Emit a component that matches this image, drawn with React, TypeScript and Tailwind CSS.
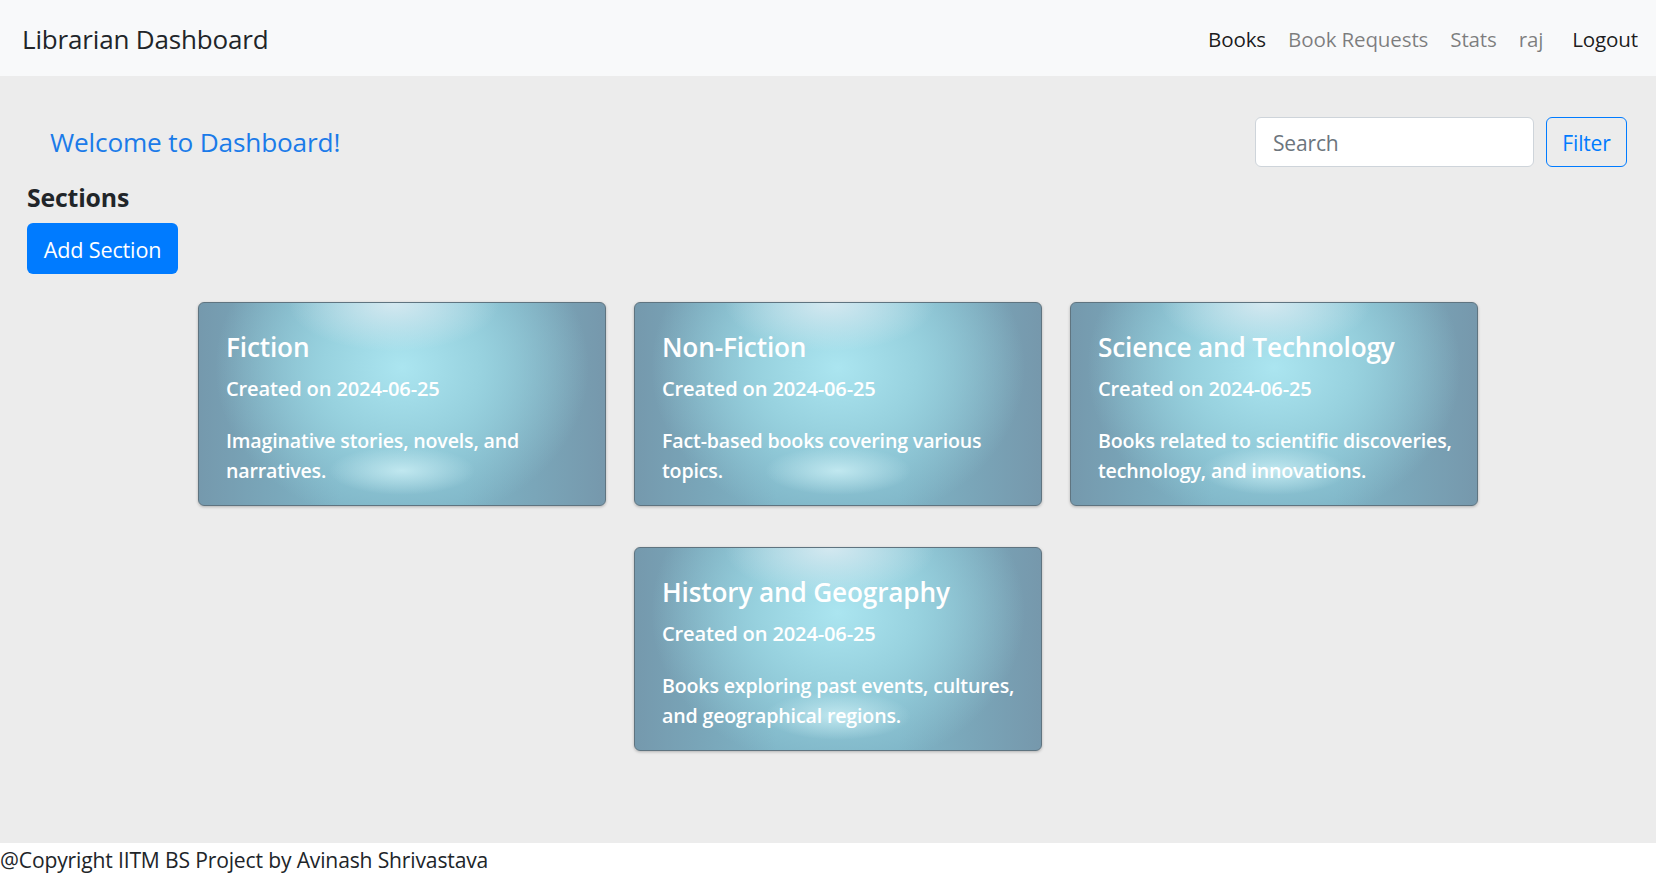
const sections = [
    {
        name: 'Fiction',
        date: '2024-06-25',
        description: 'Imaginative stories, novels, and narratives.',
    },
    {
        name: 'Non-Fiction',
        date: '2024-06-25',
        description: 'Fact-based books covering various topics.',
    },
    {
        name: 'Science and Technology',
        date: '2024-06-25',
        description:
            'Books related to scientific discoveries, technology, and innovations.',
    },
    {
        name: 'History and Geography',
        date: '2024-06-25',
        description:
            'Books exploring past events, cultures, and geographical regions.',
    },
]

function SectionCard({
    name,
    date,
    description,
}: {
    name: string
    date: string
    description: string
}) {
    return (
        <div className="w-[408px] h-[204px] rounded-[6px] border border-[#5f7480] shadow-[0_1px_3px_rgba(0,0,0,0.25)] pt-[27px] pl-[27px] pr-[14px] text-white bg-[radial-gradient(ellipse_18%_12%_at_50%_83%,rgba(205,240,246,0.8),transparent),radial-gradient(ellipse_26%_24%_at_48%_0%,rgba(222,236,243,0.85),transparent),radial-gradient(ellipse_46%_78%_at_50%_32%,#abe5f0_0%,#98d2df_42%,rgba(140,195,210,0)_100%),linear-gradient(90deg,#7599ad_0%,#7eb4c6_35%,#7eb4c6_65%,#7698ac_100%)]">
            <h5 className="text-[26.2px] leading-[34px] font-semibold">{name}</h5>
            <h6 className="mt-[11px] text-[20.1px] leading-[28px] font-semibold">
                Created on {date}
            </h6>
            <p className="mt-[23px] text-[19.6px] leading-[30px] font-semibold">
                {description}
            </p>
        </div>
    )
}

export default function App() {
    return (
        <div className="min-h-screen flex flex-col bg-[#ececec] font-['Open_Sans',sans-serif] tracking-[-0.01em]">
            <nav className="h-[76px] shrink-0 flex items-center justify-between bg-[#f8f9fa] pl-[22px] pr-[18px]">
                <span className="pt-[2px] text-[26px] text-[#212529]">
                    Librarian Dashboard
                </span>
                <div className="flex items-center gap-[22px] pt-[2px] text-[20.6px]">
                    <a className="text-[rgba(0,0,0,0.9)]">Books</a>
                    <a className="text-[rgba(0,0,0,0.5)]">Book Requests</a>
                    <a className="text-[rgba(0,0,0,0.5)]">Stats</a>
                    <a className="text-[rgba(0,0,0,0.5)]">raj</a>
                    <a className="ml-[7px] text-[rgba(0,0,0,0.9)]">Logout</a>
                </div>
            </nav>

            <main className="flex-1 px-[27px]">
                <div className="mt-[41px] flex items-center justify-between pr-[2px]">
                    <h5 className="pl-[23px] pt-[2px] text-[26.2px] text-[#1b7be9]">
                        Welcome to Dashboard!
                    </h5>
                    <div className="flex items-center gap-[12px]">
                        <input
                            placeholder="Search"
                            className="w-[279px] h-[50px] rounded-[6px] border border-[#ced4da] bg-white px-[17px] pt-[2px] text-[21px] text-[#495057] placeholder:text-[#6c757d] outline-none"
                        />
                        <button className="w-[81px] h-[50px] rounded-[6px] border border-[#007bff] pt-[3px] text-[21px] text-[#007bff]">
                            Filter
                        </button>
                    </div>
                </div>

                <h4 className="mt-[15px] text-[24.8px] leading-[30px] font-bold text-[#212529]">
                    Sections
                </h4>
                <button className="mt-[11px] w-[151px] h-[51px] rounded-[6px] bg-[#007bff] pt-[3px] text-[21.6px] text-white">
                    Add Section
                </button>

                <div className="mt-[28px] flex justify-center pl-[20px]">
                    <div className="w-[1280px] flex flex-wrap justify-center gap-x-[28px] gap-y-[41px]">
                        {sections.map((s) => (
                            <SectionCard key={s.name} {...s} />
                        ))}
                    </div>
                </div>
            </main>

            <footer className="h-[33px] shrink-0 bg-white text-[21.1px] leading-[33px] text-[#212529]">
                @Copyright IITM BS Project by Avinash Shrivastava
            </footer>
        </div>
    )
}
